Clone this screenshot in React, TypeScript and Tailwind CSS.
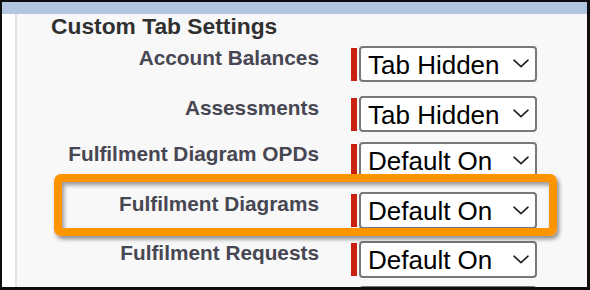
type Row = {
  label: string;
  value: string;
  height: string;
};

// row pitch in the source page is not uniform, so each row carries its own height
const ROWS: Row[] = [
  { label: 'Account Balances', value: 'Tab Hidden', height: 'h-[50px]' },
  { label: 'Assessments', value: 'Tab Hidden', height: 'h-[46.5px]' },
  { label: 'Fulfilment Diagram OPDs', value: 'Default On', height: 'h-[50px]' },
  { label: 'Fulfilment Diagrams', value: 'Default On', height: 'h-[49px]' },
  { label: 'Fulfilment Requests', value: 'Default On', height: 'h-[45px]' },
  // only the top edge of the next row peeks in under the frame
  { label: '', value: '', height: 'h-[45px]' },
];

function Chevron() {
  return (
    <svg width="16" height="9" viewBox="0 0 16 9" fill="none" className="shrink-0">
      <path d="M1 1.2 L8 7.6 L15 1.2" stroke="#1f1f1f" strokeWidth="1.6" strokeLinecap="round" strokeLinejoin="round" />
    </svg>
  );
}

function FakeSelect({ value }: { value: string }) {
  return (
    <div className="flex h-[36.5px] w-[178px] items-center justify-between rounded-[4px] border-2 border-[#787878] bg-white pl-[7px] pr-[6px]">
      <span className="pt-[2px] text-[26px] leading-none text-black">{value}</span>
      <Chevron />
    </div>
  );
}

function SettingRow({ row }: { row: Row }) {
  return (
    <div className={`flex items-start ${row.height}`}>
      <div className="w-[302px] text-right text-[20.8px] font-bold leading-[24px] text-[#474753]">
        {row.label}
      </div>
      <div className="ml-[32px] mt-[2px] h-[33px] w-[6px] bg-[#c9210f]" />
      <div className="ml-[2px]">
        <FakeSelect value={row.value} />
      </div>
    </div>
  );
}

export default function App() {
  return (
    <div
      className="h-[290px] w-[590px] overflow-hidden border-b-[3px] border-l-2 border-r-[3px] border-t-2 border-[#0e0e0e]"
      style={{ fontFamily: '"Liberation Sans", Arial, sans-serif' }}
    >
      <div className="flex h-full flex-col">
        <div className="h-[12px] shrink-0 bg-[#b4c6df]" />
        <div className="flex flex-1 overflow-hidden">
          <div className="w-[13px] shrink-0 bg-white" />
          <div className="w-[2px] shrink-0 bg-[#e3e3e3]" />
          <div className="relative flex-1 bg-[#f8f8f8]">
            <h2 className="mt-[2px] pl-[34px] text-[22.8px] font-bold leading-[20px] text-[#303030]">
              Custom Tab Settings
            </h2>
            <div className="mt-[9.5px] flex flex-col">
              {ROWS.map((row, i) => (
                <SettingRow key={i} row={row} />
              ))}
            </div>

            {/* highlight annotation drawn over the row */}
            <div className="pointer-events-none absolute left-[37px] top-[159.5px] h-[62.5px] w-[503px] rounded-[7px] border-[8px] border-[#fd9400] shadow-[2px_3px_4px_rgba(0,0,0,0.45),inset_2px_3px_4px_rgba(0,0,0,0.4)]" />
          </div>
        </div>
      </div>
    </div>
  );
}
